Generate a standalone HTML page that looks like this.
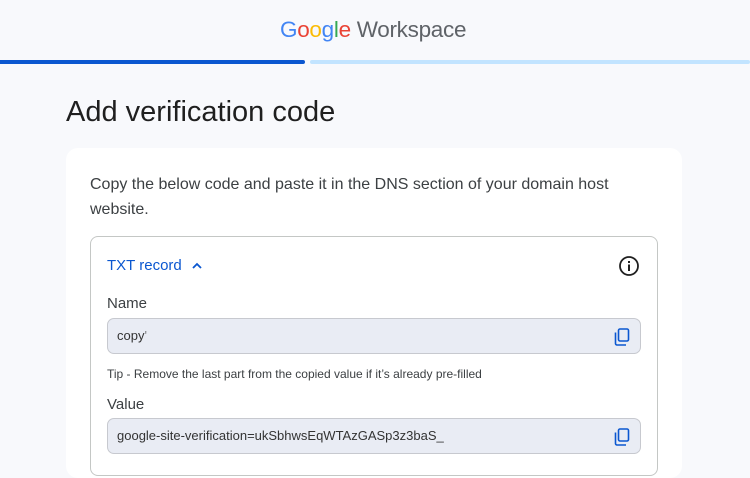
<!DOCTYPE html>
<html><head><meta charset="utf-8"><style>
*{margin:0;padding:0;box-sizing:border-box}
body{width:750px;height:461px;overflow:hidden;background:#f8f9fc;font-family:"Liberation Sans",Arial,sans-serif;position:relative;color:#1f1f1f}
.abs{position:absolute}
.logo{left:280px;top:17px;font-size:22.5px;white-space:nowrap;letter-spacing:-0.3px}
.field{left:107px;width:534px;height:36px;background:#e9ecf4;border:1px solid #c7c9cf;border-radius:7px;font-size:13px;color:#333;padding-left:9px;line-height:34px}
.copy{position:absolute;right:10px;top:9px}
</style></head><body>
<div class="abs logo"><span style="color:#4285f4">G</span><span style="color:#ea4335">o</span><span style="color:#fbbc05">o</span><span style="color:#4285f4">g</span><span style="color:#34a853">l</span><span style="color:#ea4335">e</span> <span style="color:#5f6368">Workspace</span></div>
<div class="abs" style="left:0;top:60px;width:305px;height:4px;background:#0b57d0;border-radius:0 2px 2px 0"></div>
<div class="abs" style="left:310px;top:60px;width:440px;height:4px;background:#c2e4ff;border-radius:2px"></div>
<div class="abs" style="left:66px;top:96px;font-size:29px;color:#1f1f1f">Add verification code</div>
<div class="abs" style="left:66px;top:148px;width:616px;height:330px;background:#fff;border-radius:12px"></div>
<div class="abs" style="left:90px;top:172px;font-size:16px;line-height:25px;color:#3c4043;width:560px">Copy the below code and paste it in the DNS section of your domain host website.</div>
<div class="abs" style="left:90px;top:236px;width:568px;height:240px;border:1px solid #c4c7c5;border-radius:8px"></div>
<div class="abs" style="left:107px;top:257px;font-size:15px;color:#0b57d0">TXT record</div>
<svg class="abs" style="left:190px;top:260px" width="14" height="12" viewBox="0 0 14 12"><path d="M3 8l4-4 4 4" fill="none" stroke="#0b57d0" stroke-width="1.8"/></svg>
<svg class="abs" style="left:618px;top:255px" width="22" height="22" viewBox="0 0 22 22"><circle cx="11" cy="11" r="9" fill="none" stroke="#1f1f1f" stroke-width="1.8"/><rect x="10" y="9.5" width="2" height="6.5" fill="#1f1f1f"/><rect x="10" y="6" width="2" height="2" fill="#1f1f1f"/></svg>
<div class="abs" style="left:107px;top:295px;font-size:15px;color:#3c4043">Name</div>
<div class="abs field" style="top:318px">copy<span style="opacity:.6">'</span><svg class="copy" width="16" height="18" viewBox="0 0 16 18"><rect x="4.5" y="1" width="10" height="12" rx="1.5" fill="none" stroke="#0b57d0" stroke-width="1.6"/><path d="M1.5 4.5v11a1.5 1.5 0 0 0 1.5 1.5h9" fill="none" stroke="#0b57d0" stroke-width="1.6"/></svg></div>
<div class="abs" style="left:107px;top:367px;font-size:12px;color:#3c4043">Tip - Remove the last part from the copied value if it’s already pre-filled</div>
<div class="abs" style="left:107px;top:396px;font-size:15px;color:#3c4043">Value</div>
<div class="abs field" style="top:418px">google-site-verification=ukSbhwsEqWTAzGASp3z3baS_<svg class="copy" width="16" height="18" viewBox="0 0 16 18"><rect x="4.5" y="1" width="10" height="12" rx="1.5" fill="none" stroke="#0b57d0" stroke-width="1.6"/><path d="M1.5 4.5v11a1.5 1.5 0 0 0 1.5 1.5h9" fill="none" stroke="#0b57d0" stroke-width="1.6"/></svg></div>
</body></html>
